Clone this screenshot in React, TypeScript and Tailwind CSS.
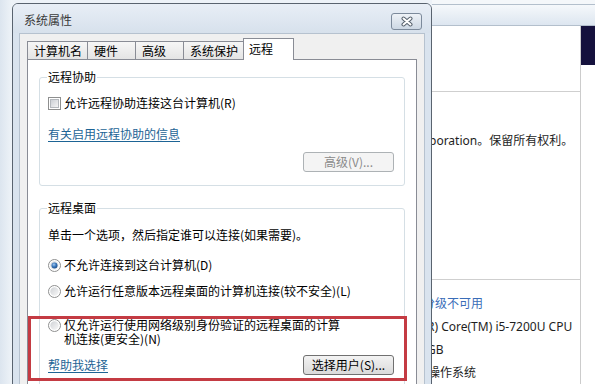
import React from "react";

// tabs of the dialog, last one is the selected "远程"
const tabs = [
  { label: "计算机名", width: "w-[61px]" },
  { label: "硬件", width: "w-[49px]" },
  { label: "高级", width: "w-[49px]" },
  { label: "系统保护", width: "w-[61px]" }
];

const CheckBox: React.FC = () => (
  <svg width="13" height="13" viewBox="0 0 13 13" className="shrink-0">
    <defs>
      <linearGradient id="cbFill" x1="0" y1="0" x2="1" y2="1">
        <stop offset="0" stopColor="#c9cdd3" />
        <stop offset="1" stopColor="#f7f7f7" />
      </linearGradient>
    </defs>
    <rect x="0.5" y="0.5" width="12" height="12" fill="#ffffff" stroke="#8e8f8f" />
    <rect x="2.5" y="2.5" width="8" height="8" fill="url(#cbFill)" stroke="#b4b8bd" />
  </svg>
);

const Radio: React.FC<{ checked?: boolean }> = ({ checked }) => (
  <svg width="13" height="13" viewBox="0 0 13 13" className="shrink-0">
    <defs>
      <linearGradient id="rbFill" x1="0" y1="0" x2="1" y2="1">
        <stop offset="0" stopColor="#cfd2d6" />
        <stop offset="1" stopColor="#f8f8f8" />
      </linearGradient>
      <radialGradient id="rbDot" cx="0.4" cy="0.35" r="0.7">
        <stop offset="0" stopColor="#a6cbf0" />
        <stop offset="0.5" stopColor="#3b78bd" />
        <stop offset="1" stopColor="#1a4a84" />
      </radialGradient>
    </defs>
    <circle cx="6.5" cy="6.5" r="6" fill="#ffffff" stroke="#8e8f8f" />
    <circle cx="6.5" cy="6.5" r="4.2" fill="url(#rbFill)" />
    {checked && <circle cx="6.5" cy="6.5" r="3" fill="url(#rbDot)" />}
  </svg>
);

const CloseButton: React.FC = () => (
  <div className="mt-[9px] w-[31px] h-[17px] rounded-[3px] border border-[#7c8a9b] bg-linear-to-b from-[#eef2f7] to-[#cdd8e4] flex items-center justify-center">
    <svg width="14" height="11" viewBox="0 0 14 11">
      <path d="M3.5 2.5 L10.5 8.5 M10.5 2.5 L3.5 8.5" stroke="#56616d" strokeWidth="4" strokeLinecap="round" />
      <path d="M3.5 2.5 L10.5 8.5 M10.5 2.5 L3.5 8.5" stroke="#ffffff" strokeWidth="2" strokeLinecap="round" />
    </svg>
  </div>
);

const App: React.FC = () => {
  return (
    <div className="relative w-[595px] h-[384px] overflow-hidden flex bg-[#edf2f8] font-['Noto_Sans_CJK_SC',sans-serif] text-[12px] text-black">
      {/* window behind, left edge */}
      <div className="w-[12px] shrink-0 bg-linear-to-r from-[#dce5ef] to-[#eef3f8]" />

      {/* 系统属性 dialog */}
      <div className="mt-[3px] w-[420px] h-[400px] shrink-0 rounded-t-[6px] border border-[#59636f] bg-[#d9e3ee] flex flex-col">
        <div className="h-[29px] shrink-0 flex items-start justify-between pl-[11px] pr-[9px] rounded-t-[5px] bg-linear-to-b from-[#e8eef6] to-[#d7e1ec]">
          <span className="mt-[8px] leading-[16px] text-[#3a3a3a]">系统属性</span>
          <CloseButton />
        </div>

        <div className="mx-[6px] flex-1 border border-[#b6c2cf] bg-[#f0f0f0] pt-[4px] pl-[7px] pr-[7px]">
          <div className="flex items-end h-[21px]">
            {tabs.map((tab, index) => (
              <div
                key={tab.label}
                className={`${tab.width} ${index > 0 ? "-ml-px" : ""} h-[18px] border border-b-0 border-[#898c95] bg-linear-to-b from-[#f6f6f6] to-[#e4e4e4] pl-[6px] leading-[17px] whitespace-nowrap`}
              >
                {tab.label}
              </div>
            ))}
            <div className="relative z-10 -ml-px -mb-px w-[51px] h-[22px] border border-b-0 border-[#898c95] bg-white pl-[5px] leading-[20px]">
              远程
            </div>
          </div>

          <div className="h-[340px] border border-[#898c95] bg-white pt-[9px] px-[11px]">
            <fieldset className="border border-[#d5dfe5] rounded-[3px] px-[8px] pb-[13px]">
              <legend className="-ml-px px-px leading-[16px]">远程协助</legend>
              <div className="mt-[10px] h-[16px] flex items-center gap-[3px]">
                <CheckBox />
                <span className="leading-[16px]">允许远程协助连接这台计算机(R)</span>
              </div>
              <div className="mt-[15px] leading-[16px]">
                <span className="text-[#1d6495] underline underline-offset-2">有关启用远程协助的信息</span>
              </div>
              <div className="mt-[10px] flex justify-end mr-[2px]">
                <div className="w-[91px] h-[20px] rounded-[3px] border border-[#adb2b5] bg-[#f4f4f4] text-[#8a8a8a] flex items-center justify-center">
                  高级(V)...
                </div>
              </div>
            </fieldset>

            <fieldset className="mt-[14px] border border-[#d5dfe5] rounded-[3px] px-[8px] pb-[20px]">
              <legend className="-ml-px px-px leading-[16px]">远程桌面</legend>
              <div className="mt-[11px] leading-[16px]">单击一个选项，然后指定谁可以连接(如果需要)。</div>
              <div className="mt-[14px] h-[16px] flex items-center gap-[3px]">
                <Radio checked />
                <span>不允许连接到这台计算机(D)</span>
              </div>
              <div className="mt-[10px] h-[16px] flex items-center gap-[3px]">
                <Radio />
                <span>允许运行任意版本远程桌面的计算机连接(较不安全)(L)</span>
              </div>
              <div className="mt-[19px] flex items-start gap-[3px]">
                <div className="mt-px">
                  <Radio />
                </div>
                <span className="w-[280px] leading-[14px]">仅允许运行使用网络级别身份验证的远程桌面的计算机连接(更安全)(N)</span>
              </div>
              <div className="mt-[9px] h-[20px] flex items-center justify-between">
                <span className="text-[#1d6495] underline underline-offset-2 leading-[16px]">帮助我选择</span>
                <div className="mr-[2px] w-[91px] h-[20px] rounded-[3px] border border-[#707070] bg-linear-to-b from-[#f3f3f3] to-[#dadada] flex items-center justify-center">
                  选择用户(S)...
                </div>
              </div>
            </fieldset>
          </div>
        </div>
      </div>

      {/* window behind, right side */}
      <div className="w-[163px] shrink-0 flex flex-col font-['Noto_Sans','Noto_Sans_CJK_SC',sans-serif] text-[#1e1e1e]">
        <div className="h-[5px] bg-[#f4f7fa]" />
        <div className="h-[24px] border-y border-[#b3bfcc] bg-linear-to-b from-[#f5f8fb] to-[#dde6f0]" />
        <div className="flex flex-1">
          <div className="w-[148px] bg-white overflow-hidden whitespace-nowrap">
            <div className="mt-[65px] h-px bg-[#cfcfcf]" />
            <div className="mt-[41px] leading-[16px] -ml-[3px]">poration。保留所有权利。</div>
            <div className="mt-[130px] h-px bg-[#cfcfcf]" />
            <div className="mt-[12px] leading-[23px] -ml-[9px] text-[#3a6db8]">分级不可用</div>
            <div className="leading-[23px] -ml-[5px]">R) Core(TM) i5-7200U CPU</div>
            <div className="leading-[23px] -ml-[5px]">GB</div>
            <div className="leading-[23px] -ml-[4px]">操作系统</div>
          </div>
          <div className="w-[15px] border-l border-[#cccccc] bg-white">
            <div className="h-[39px] bg-[#15113d]" />
          </div>
        </div>
      </div>

      {/* red annotation frame */}
      <div className="absolute left-[28px] top-[316px] w-[379px] h-[65px] border-[3px] border-[#c43b43]" />
    </div>
  );
};

export default App;
